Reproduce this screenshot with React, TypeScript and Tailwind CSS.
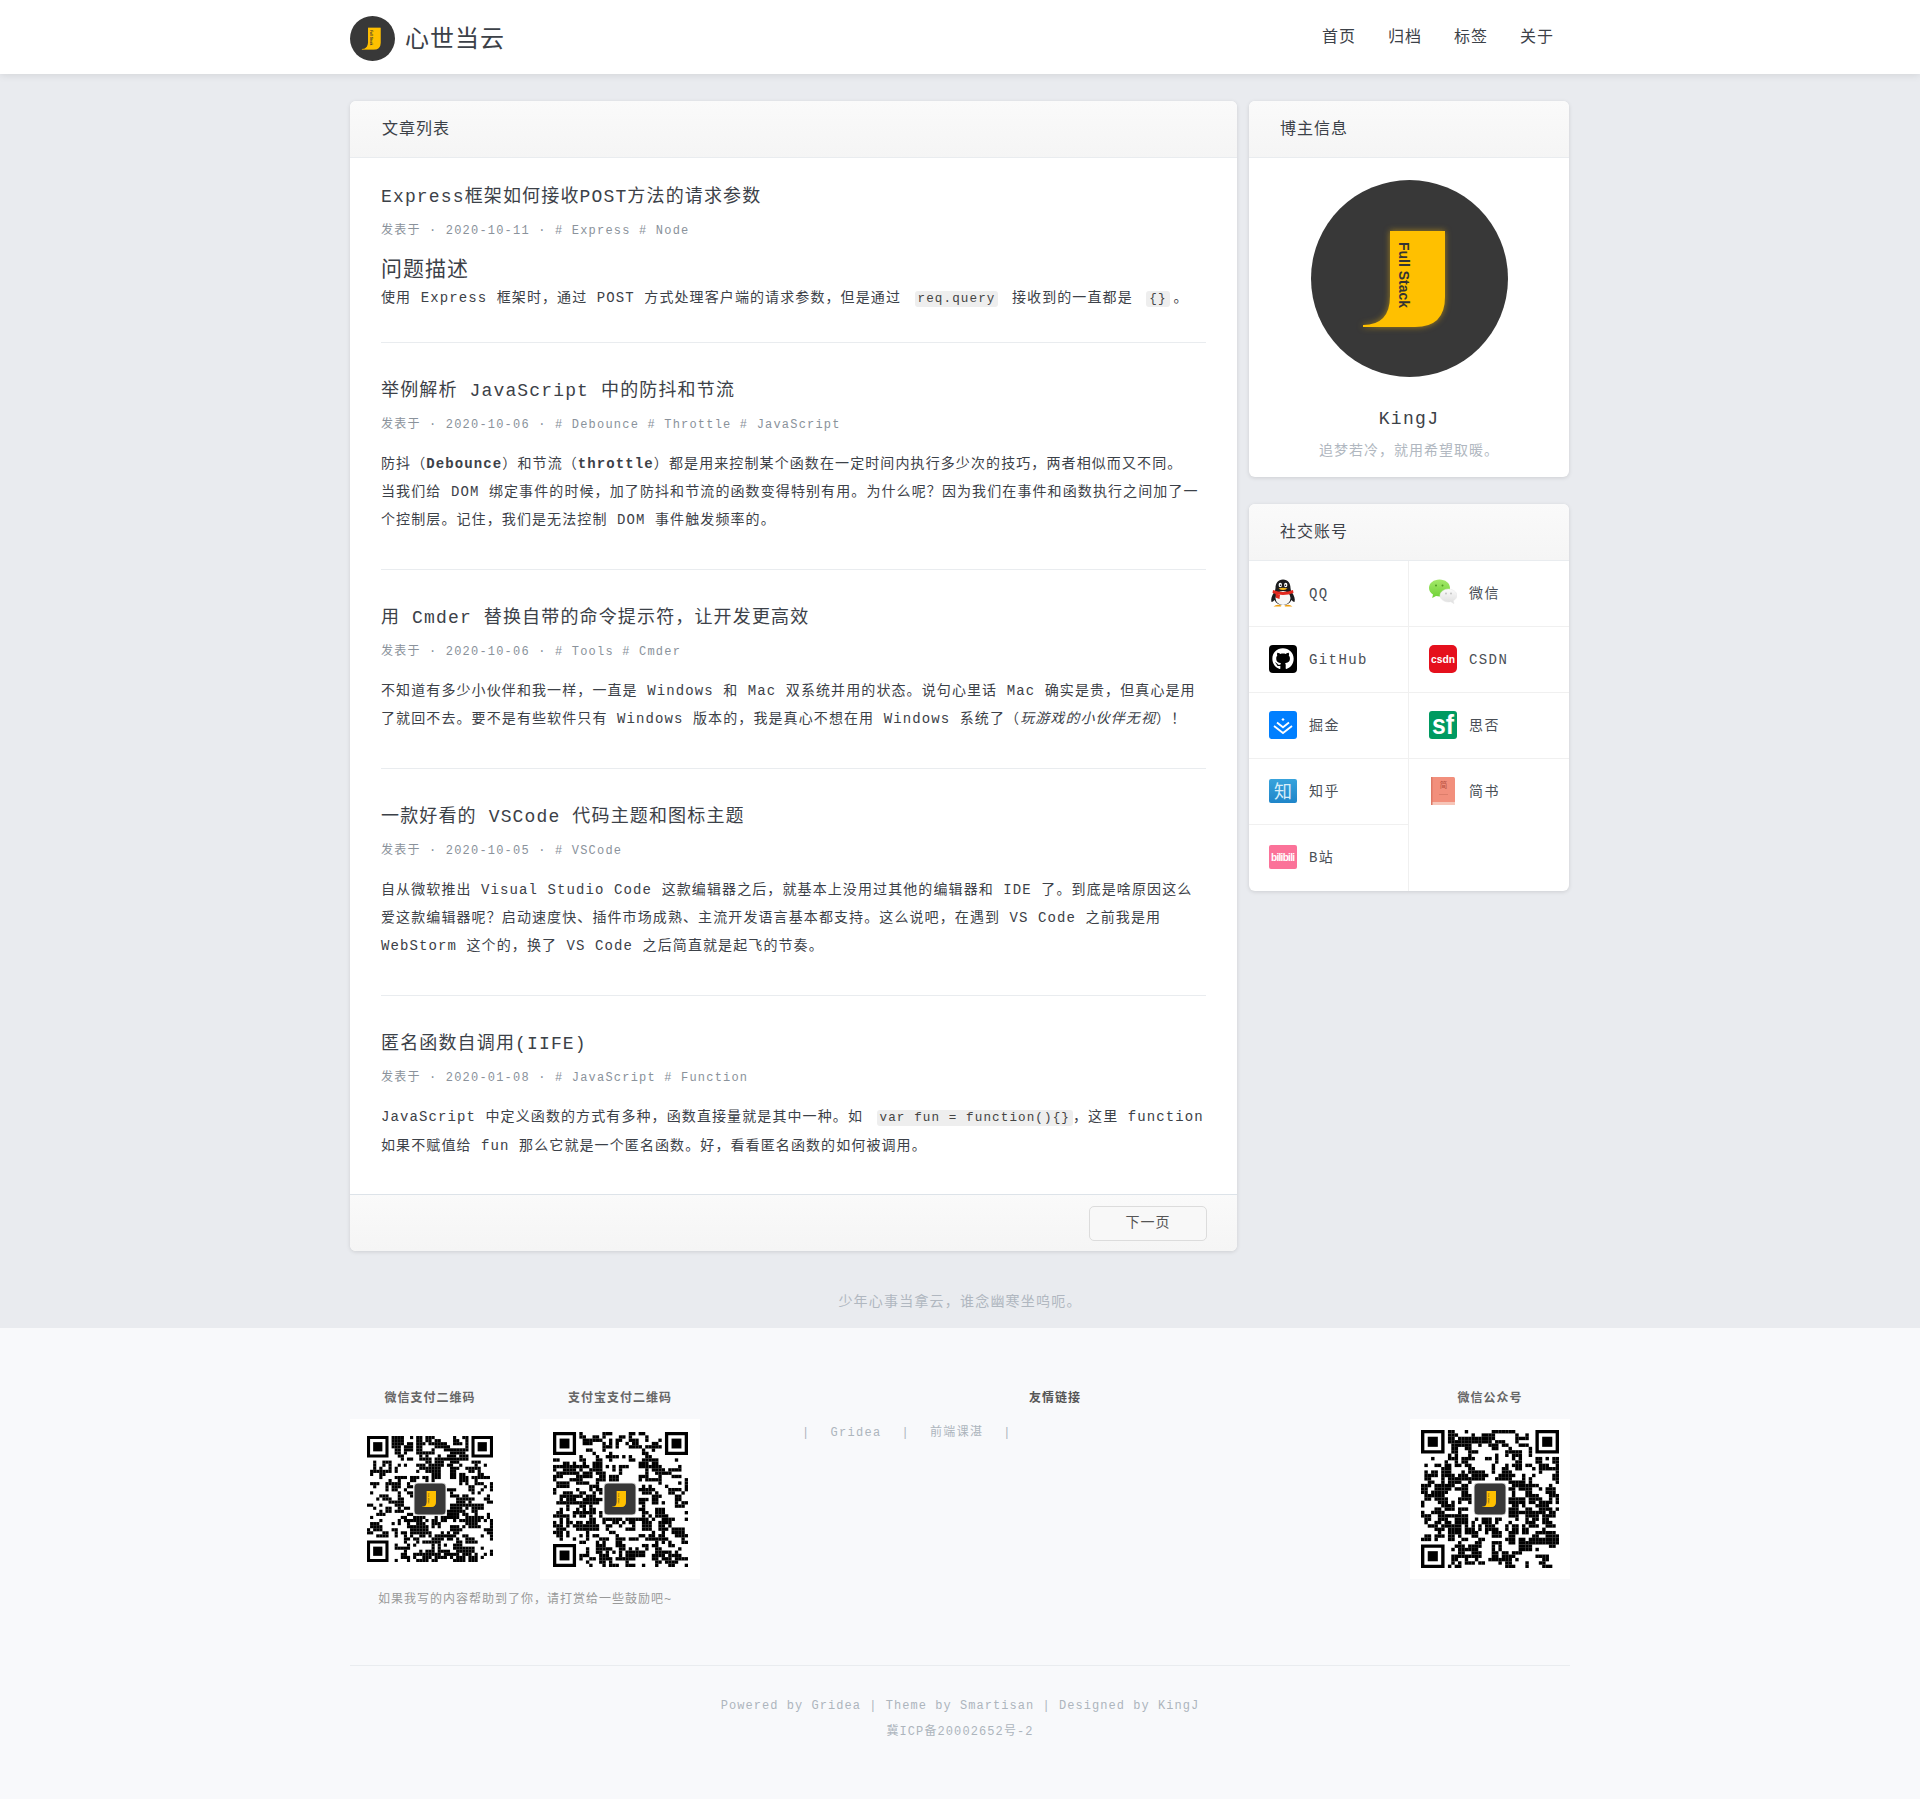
import React from "react";
import { FaGithub } from "react-icons/fa";

const FONT = "font-['Liberation_Mono','Noto_Sans_CJK_SC',monospace]";

function JLogo({ size, tile }: { size: number; tile?: boolean }) {
  return (
    <svg width={size} height={size} viewBox="0 0 197 197" className="block shrink-0">
      {tile ? <rect x="3" y="3" width="191" height="191" rx="24" fill="#383838" stroke="#ddd" strokeWidth="6" /> : <circle cx="98.5" cy="98.5" r="98.5" fill="#383838" />}
      <path d="M79 51H134V117Q134 147 104 147H52V145Q79 145 79 116Z" fill="#ffc000" className="drop-shadow-[0_0_3px_rgba(255,192,0,0.55)]" />
      <text x="0" y="0" transform="translate(88 62) rotate(90)" fontFamily="Liberation Sans" fontWeight="700" fontSize="14" letterSpacing="0" fill="#333">Full Stack</text>
    </svg>
  );
}

function QR({ n, seed, px }: { n: number; seed: number; px: number }) {
  const rects: React.ReactNode[] = [];
  let s = seed;
  const rnd = () => {
    s = (s * 1664525 + 1013904223) % 4294967296;
    return (s >>> 8) / 16777216;
  };
  const inFinder = (x: number, y: number) => (x < 8 && y < 8) || (x >= n - 8 && y < 8) || (x < 8 && y >= n - 8);
  const c = Math.floor(n / 2);
  const above: boolean[] = new Array(n).fill(false);
  for (let y = 0; y < n; y++) {
    let prev = false;
    for (let x = 0; x < n; x++) {
      if (inFinder(x, y)) {
        above[x] = false;
        continue;
      }
      const p = 0.28 + (prev ? 0.22 : 0) + (above[x] ? 0.2 : 0);
      prev = rnd() < p;
      above[x] = prev;
      if (Math.abs(x - c) < 6 && Math.abs(y - c) < 6) continue;
      if (prev) rects.push(<rect key={x + "-" + y} x={x} y={y} width="1.02" height="1.02" />);
    }
  }
  const finder = (x: number, y: number) => (
    <g key={x + "f" + y}>
      <path d={`M${x} ${y}h7v7h-7zM${x + 1} ${y + 1}v5h5v-5z`} fillRule="evenodd" />
      <rect x={x + 2} y={y + 2} width="3" height="3" />
    </g>
  );
  return (
    <div className="relative flex h-[160px] w-[160px] items-center justify-center bg-white">
      <svg width={px} height={px} viewBox={`0 0 ${n} ${n}`} fill="#000" className="block">
        {rects}
        {finder(0, 0)}
        {finder(n - 7, 0)}
        {finder(0, n - 7)}
      </svg>
      <div className="absolute left-1/2 top-1/2 -translate-x-1/2 -translate-y-1/2">
        <JLogo size={33} tile />
      </div>
    </div>
  );
}

function QQIcon() {
  return (
    <svg width="28" height="28" viewBox="0 0 28 28">
      <path d="M14 0.500C9 0.500 6.500 4.500 6.500 9C6.500 10.500 6 12 5 13.500C3 16.500 1.500 20 2.500 23C3.500 23 4.500 22 5.500 21C7 24.500 10 26 14 26C18 26 21 24.500 22.500 21C23.500 22 24.500 23 25.500 23C26.500 20 25 16.500 23 13.500C22 12 21.500 10.500 21.500 9C21.500 4.500 19 0.500 14 0.500Z" fill="#1c1c1e" />
      <ellipse cx="14" cy="19" rx="7.500" ry="7" fill="#f7f7f7" />
      <path d="M4 11Q14 15 24 11L24.500 14Q14 18 3.500 14Z" fill="#e2281e" />
      <path d="M6.500 14.500L11 15.800L10.500 20L6.800 18.800Z" fill="#e2281e" />
      <ellipse cx="11.300" cy="6" rx="1.700" ry="2.200" fill="#fff" />
      <ellipse cx="16.700" cy="6" rx="1.700" ry="2.200" fill="#fff" />
      <circle cx="11.600" cy="6.200" r=".8" fill="#111" />
      <circle cx="16.400" cy="6.200" r=".8" fill="#111" />
      <path d="M9.500 9.500Q14 7.800 18.500 9.500Q14 12.500 9.500 9.500Z" fill="#f5b81e" />
      <path d="M4.500 27.500Q8 24.500 12.500 26.500L12 27.500ZM15.500 26.500Q20 24.500 23.500 27.500H16Z" fill="#f0a010" />
    </svg>
  );
}

function WechatIcon() {
  return (
    <svg width="28" height="28" viewBox="0 0 28 28">
      <defs>
        <linearGradient id="wg" x1="0" y1="0" x2="0" y2="1">
          <stop offset="0" stopColor="#a4e86a" />
          <stop offset="1" stopColor="#6fd236" />
        </linearGradient>
        <linearGradient id="wb" x1="0" y1="0" x2="0" y2="1">
          <stop offset="0" stopColor="#fbfbfb" />
          <stop offset="1" stopColor="#dedede" />
        </linearGradient>
      </defs>
      <path d="M10.500 0.500C4.800 0.500 0 4 0 9C0 11.800 1.600 14 4 15.500L3.200 19L7 17C8.300 17.300 9.500 17.500 10.500 17.500C16.200 17.500 21 14 21 9S16.200 0.500 10.500 0.500Z" fill="url(#wg)" />
      <circle cx="7" cy="6.500" r="1" fill="#4f9a22" />
      <circle cx="13.500" cy="6.500" r="1" fill="#4f9a22" />
      <path d="M19.500 10C15 10 11 13 11 16.500S15 23 19.500 23C20.300 23 21.100 22.900 21.800 22.700L25 24.700L24.300 21.700C26.500 20.500 28 18.700 28 16.500C28 13 24 10 19.500 10Z" fill="url(#wb)" stroke="#e6e6e6" strokeWidth=".5" />
      <circle cx="17" cy="14.500" r=".9" fill="#c0c0c0" />
      <circle cx="22" cy="14.500" r=".9" fill="#c0c0c0" />
    </svg>
  );
}

function JuejinIcon() {
  return (
    <svg width="28" height="28" viewBox="0 0 28 28">
      <rect width="28" height="28" rx="3" fill="#007fff" />
      <path d="M14 7L15.600 8.500L14 10L12.400 8.500Z" fill="#fff" />
      <path d="M8 11.500L14 16.300L20 11.500" fill="none" stroke="#fff" strokeWidth="1.800" />
      <path d="M5 15L14 22L23 15" fill="none" stroke="#fff" strokeWidth="1.800" />
    </svg>
  );
}

function TextTile({ bg, color, text, size, y, rx, len }: { bg: string; color: string; text: string; size: number; y: number; rx: number; len: number }) {
  return (
    <svg width="28" height="28" viewBox="0 0 28 28">
      <rect width="28" height="28" rx={rx} fill={bg} />
      <text x="14" y={y} textAnchor="middle" fontSize={size} fontWeight={700} fontFamily="Liberation Sans" letterSpacing="0" textLength={len} lengthAdjust="spacingAndGlyphs" fill={color}>{text}</text>
    </svg>
  );
}

function ZhihuIcon() {
  return (
    <svg width="28" height="28" viewBox="0 0 28 28">
      <defs>
        <linearGradient id="zh" x1="0" y1="0" x2="0" y2="1">
          <stop offset="0" stopColor="#38a3dc" />
          <stop offset="1" stopColor="#1f85c9" />
        </linearGradient>
      </defs>
      <rect y="2" width="28" height="24" rx="2" fill="url(#zh)" />
      <text x="14" y="20.500" textAnchor="middle" fontSize="18" letterSpacing="0" fontFamily="Noto Sans CJK SC" fill="#d8eefa">知</text>
    </svg>
  );
}

function JianshuIcon() {
  return (
    <svg width="28" height="28" viewBox="0 0 28 28">
      <rect x="2" y="0" width="24" height="28" rx="1.500" fill="#f28f7c" />
      <rect x="2" y="25" width="24" height="3" fill="#f6c5b8" />
      <rect x="2" y="0" width="1.500" height="28" fill="#dd7865" />
      <text x="14.500" y="11" textAnchor="middle" fontSize="7.500" letterSpacing="0" fontFamily="Noto Sans CJK SC" fill="#b8503f">简</text>
      <rect x="10" y="17" width="9" height=".6" fill="#cf7362" />
    </svg>
  );
}

function BiliIcon() {
  return (
    <svg width="28" height="28" viewBox="0 0 28 28">
      <rect y="2" width="28" height="24" rx="2" fill="#fb7299" />
      <text x="14" y="18" textAnchor="middle" fontSize="10" fontWeight="700" letterSpacing="0" fontFamily="Liberation Sans" textLength="24" lengthAdjust="spacing" fill="#fff">bilibili</text>
    </svg>
  );
}

const socials: [React.ReactNode, string][] = [
  [<QQIcon />, "QQ"],
  [<WechatIcon />, "微信"],
  [
    <span className="flex h-[28px] w-[28px] items-center justify-center rounded-[4px] bg-black">
      <FaGithub className="h-[22px] w-[22px] text-white" />
    </span>,
    "GitHub",
  ],
  [<TextTile bg="#e5101d" color="#fff" text="csdn" size={11} y={18} rx={5} len={24} />, "CSDN"],
  [<JuejinIcon />, "掘金"],
  [<TextTile bg="#009a61" color="#fff" text="sf" size={27} y={23} rx={3} len={22} />, "思否"],
  [<ZhihuIcon />, "知乎"],
  [<JianshuIcon />, "简书"],
  [<BiliIcon />, "B站"],
];

function CardHead({ children, wide }: { children: React.ReactNode; wide?: boolean }) {
  return (
    <div className={`flex h-[57px] items-center border-b border-[#e9ecef] bg-gradient-to-b from-[#fafafa] to-[#f5f5f5] pt-[2px] text-[16px] tracking-[1px] text-[#3c4148] ${wide ? "px-[32px]" : "px-[31px]"}`}>
      {children}
    </div>
  );
}

function Title({ children }: { children: React.ReactNode }) {
  return <h2 className="text-[18px] leading-[28px] tracking-[1.15px] text-[#3c4148]">{children}</h2>;
}

function Meta({ children }: { children: React.ReactNode }) {
  return <div className="mt-[10px] h-[20px] text-[12px] leading-[20px] tracking-[1.2px] text-[#8a929b]">{children}</div>;
}

function Code({ children, tight }: { children: React.ReactNode; tight?: boolean }) {
  return <code className={`rounded-[3px] bg-[#eeeeee] px-[3px] py-[1px] text-[12.6px] text-[#444] ${tight ? "ml-[4px]" : "mx-[4px]"}`}>{children}</code>;
}

function Article({ title, meta, last, children }: { title: string; meta: string; last?: boolean; children: React.ReactNode }) {
  return (
    <article className={last ? "pb-[34px] pt-[34px]" : "border-b border-[#e9ecef] pb-[35px] pt-[34px]"}>
      <Title>{title}</Title>
      <Meta>{meta}</Meta>
      <p className="mt-[15px] whitespace-nowrap text-[14px] leading-[28px] tracking-[1.1px] text-[#3c4148]">{children}</p>
    </article>
  );
}

export default function App() {
  return (
    <div className={`${FONT} min-h-[1799px] bg-[#e9ebef]`}>
      <header className="relative z-10 h-[74px] bg-white shadow-[0_1px_8px_rgba(0,0,0,0.1)]">
        <div className="mx-auto flex h-full w-[1220px] items-center justify-between">
          <div className="flex items-center gap-[10px] pt-[3px]">
            <JLogo size={45} />
            <span className="pt-[5px] text-[24px] tracking-[1px] text-[#3c4148]">心世当云</span>
          </div>
          <nav className="flex gap-[32px] pr-[16px] pt-[2px] text-[16px] tracking-[1px] text-[#3c4148]">
            <a>首页</a>
            <a>归档</a>
            <a>标签</a>
            <a>关于</a>
          </nav>
        </div>
      </header>

      <main className="mx-auto flex w-[1220px] items-start justify-between pt-[27px]">
        <section className="w-[887px] overflow-hidden rounded-[6px] bg-white shadow-[0_1px_4px_rgba(0,0,0,0.12)]">
          <CardHead wide>文章列表</CardHead>
          <div className="px-[31px]">
            <article className="border-b border-[#e9ecef] pb-[29px] pt-[25px]">
              <Title>Express框架如何接收POST方法的请求参数</Title>
              <Meta>发表于 · 2020-10-11 · # Express # Node</Meta>
              <h3 className="mt-[17px] text-[21px] leading-[26px] tracking-[1px] text-[#3c4148]">问题描述</h3>
              <p className="whitespace-nowrap text-[14px] leading-[28px] tracking-[1.1px] text-[#3c4148]">
                使用 Express 框架时，通过 POST 方式处理客户端的请求参数，但是通过 <Code>req.query</Code> 接收到的一直都是 <Code>{"{}"}</Code>。
              </p>
            </article>
            <Article title="举例解析 JavaScript 中的防抖和节流" meta="发表于 · 2020-10-06 · # Debounce # Throttle # JavaScript">
              防抖（<strong>Debounce</strong>）和节流（<strong>throttle</strong>）都是用来控制某个函数在一定时间内执行多少次的技巧，两者相似而又不同。<br />
              当我们给 DOM 绑定事件的时候，加了防抖和节流的函数变得特别有用。为什么呢？因为我们在事件和函数执行之间加了一<br />
              个控制层。记住，我们是无法控制 DOM 事件触发频率的。
            </Article>
            <Article title="用 Cmder 替换自带的命令提示符，让开发更高效" meta="发表于 · 2020-10-06 · # Tools # Cmder">
              不知道有多少小伙伴和我一样，一直是 Windows 和 Mac 双系统并用的状态。说句心里话 Mac 确实是贵，但真心是用<br />
              了就回不去。要不是有些软件只有 Windows 版本的，我是真心不想在用 Windows 系统了（<em>玩游戏的小伙伴无视</em>）！
            </Article>
            <Article title="一款好看的 VSCode 代码主题和图标主题" meta="发表于 · 2020-10-05 · # VSCode">
              自从微软推出 Visual Studio Code 这款编辑器之后，就基本上没用过其他的编辑器和 IDE 了。到底是啥原因这么<br />
              爱这款编辑器呢？启动速度快、插件市场成熟、主流开发语言基本都支持。这么说吧，在遇到 VS Code 之前我是用<br />
              WebStorm 这个的，换了 VS Code 之后简直就是起飞的节奏。
            </Article>
            <Article last title="匿名函数自调用(IIFE)" meta="发表于 · 2020-01-08 · # JavaScript # Function">
              JavaScript 中定义函数的方式有多种，函数直接量就是其中一种。如 <Code tight>var fun = function(){"{}"}</Code>，这里 function<br />
              如果不赋值给 fun 那么它就是一个匿名函数。好，看看匿名函数的如何被调用。
            </Article>
          </div>
          <div className="flex h-[57px] items-center justify-end border-t border-[#dde3e9] bg-gradient-to-b from-[#fafafa] to-[#f5f5f5] px-[30px]">
            <button className="h-[35px] w-[118px] rounded-[5px] border border-[#dcdcdc] bg-[#f8f8f8] text-[14px] tracking-[1px] text-[#555]">下一页</button>
          </div>
        </section>

        <aside className="mr-[1px] flex w-[320px] flex-col gap-[27px]">
          <section className="overflow-hidden rounded-[6px] bg-white shadow-[0_1px_4px_rgba(0,0,0,0.12)]">
            <CardHead>博主信息</CardHead>
            <div className="flex flex-col items-center pb-[13px] pt-[22px]">
              <JLogo size={197} />
              <div className="mt-[29px] text-[18px] leading-[26px] tracking-[1.3px] text-[#3c4148]">KingJ</div>
              <div className="mt-[6px] text-[14px] leading-[26px] tracking-[1px] text-[#b0b7c0]">追梦若冷，就用希望取暖。</div>
            </div>
          </section>
          <section className="overflow-hidden rounded-[6px] bg-white shadow-[0_1px_4px_rgba(0,0,0,0.12)]">
            <CardHead>社交账号</CardHead>
            <div className="grid grid-cols-2">
              {socials.map(([icon, label], i) => (
                <div key={label} className={`flex h-[66px] items-center gap-[12px] pl-[20px] text-[14px] tracking-[1.4px] text-[#4a4f56] ${i % 2 === 0 ? "border-r border-[#f0f0f0]" : ""} ${i < 7 ? "border-b border-[#f0f0f0]" : ""}`}>
                  <span className="mb-[2px] block h-[28px] w-[28px]">{icon}</span>
                  <span className="pt-[1px]">{label}</span>
                </div>
              ))}
              <div className="h-[66px]" />
            </div>
          </section>
        </aside>
      </main>

      <div className="flex h-[77px] items-start justify-center pt-[41px] text-[14px] leading-[20px] tracking-[1.2px] text-[#b0b7c0]">少年心事当拿云，谁念幽寒坐呜呃。</div>

      <footer className="h-[471px] bg-[#f8f9fb] pt-[61px]">
        <div className="mx-auto w-[1220px]">
          <div className="flex items-start justify-between border-b border-[#e9ecef] pb-[55px]">
            <div className="w-[350px]">
              <div className="flex justify-between">
                <div className="w-[160px]">
                  <h4 className="text-center text-[12px] font-bold leading-[20px] tracking-[1px] text-[#666]">微信支付二维码</h4>
                  <div className="mt-[10px]"><QR n={41} seed={11} px={126} /></div>
                </div>
                <div className="w-[160px]">
                  <h4 className="text-center text-[12px] font-bold leading-[20px] tracking-[1px] text-[#666]">支付宝支付二维码</h4>
                  <div className="mt-[10px]"><QR n={41} seed={29} px={135} /></div>
                </div>
              </div>
              <p className="mt-[11px] text-center text-[12px] leading-[20px] tracking-[1px] text-[#999]">如果我写的内容帮助到了你，请打赏给一些鼓励吧~</p>
            </div>
            <div className="w-[710px]">
              <h4 className="text-center text-[12px] font-bold leading-[20px] tracking-[1px] text-[#555]">友情链接</h4>
              <div className="mt-[14px] flex items-center gap-[20px] pl-[102px] text-[12px] leading-[20px] tracking-[1.3px] text-[#adb5bd]">
                <span>|</span>
                <a>Gridea</a>
                <span>|</span>
                <a>前端课湛</a>
                <span>|</span>
              </div>
            </div>
            <div className="w-[160px]">
              <h4 className="text-center text-[12px] font-bold leading-[20px] tracking-[1px] text-[#666]">微信公众号</h4>
              <div className="mt-[10px]"><QR n={41} seed={57} px={138} /></div>
            </div>
          </div>
          <div className="pt-[27px] text-center text-[12px] leading-[26px] text-[#adb5bd]">
            <div className="tracking-[1.05px]">Powered by Gridea | Theme by Smartisan | Designed by KingJ</div>
            <div className="tracking-[1.1px]">冀ICP备20002652号-2</div>
          </div>
        </div>
      </footer>
    </div>
  );
}
